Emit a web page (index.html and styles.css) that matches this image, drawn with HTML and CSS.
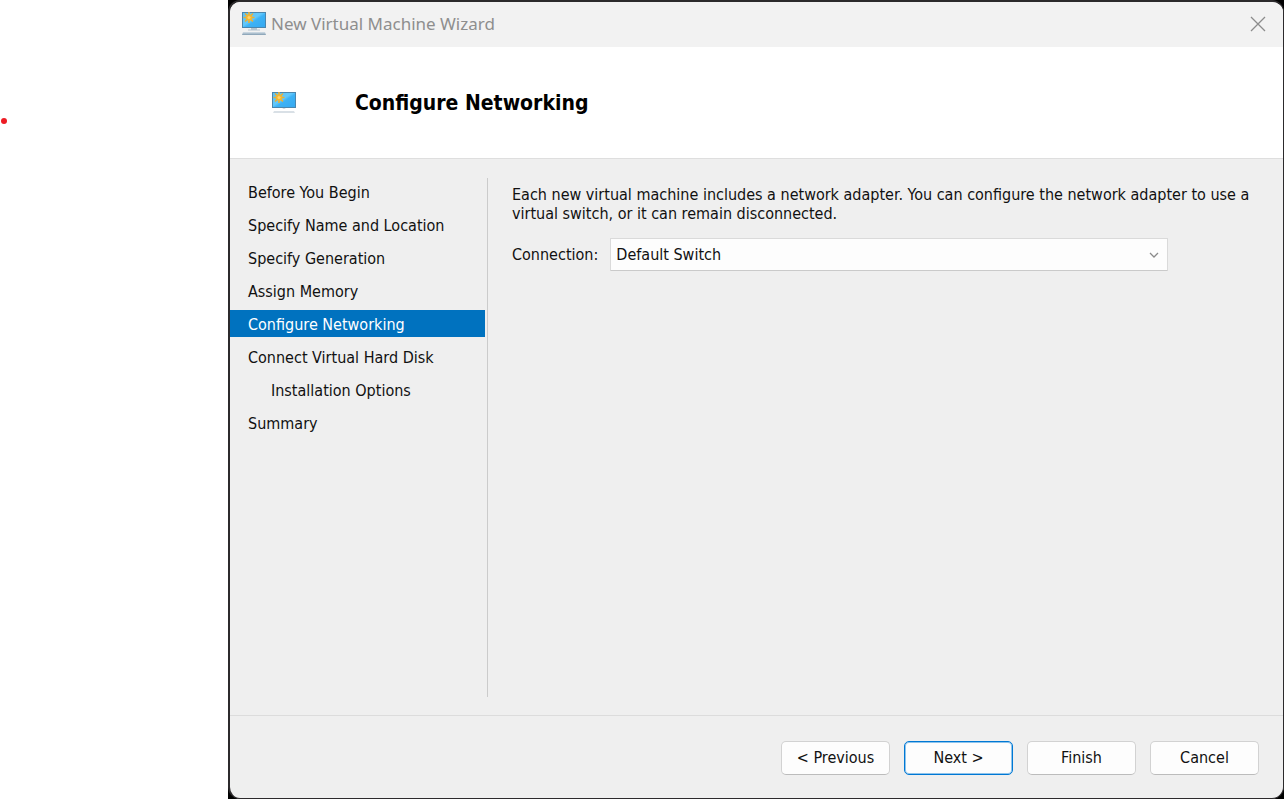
FILE: index.html
```html
<!DOCTYPE html>
<html lang="en">
<head>
<meta charset="utf-8">
<title>New Virtual Machine Wizard</title>
<link rel="stylesheet" href="styles.css">
</head>
<body>
<svg class="symbols" aria-hidden="true">
  <defs>
    <linearGradient id="screen" x1="0" y1="0" x2="1" y2="1">
      <stop offset="0" stop-color="#5cc3f5"/><stop offset=".45" stop-color="#62c8fb"/><stop offset=".55" stop-color="#3db2f5"/><stop offset="1" stop-color="#35a8f0"/>
    </linearGradient>
    <linearGradient id="base" x1="0" y1="0" x2="0" y2="1">
      <stop offset="0" stop-color="#d5e0e8"/><stop offset="1" stop-color="#829db2"/>
    </linearGradient>
    <symbol id="screen-sun" viewBox="0 0 24 16">
      <rect x=".5" y=".5" width="23" height="15" fill="url(#screen)" stroke="#4a86ae"/>
      <path d="M7 0v11M1.500 5.500h11M3 1.500l8 8M11 1.500l-8 8" fill="none" stroke="#e9ae35" stroke-width="1.600"/>
      <circle cx="7" cy="5.500" r="3.300" fill="#f2b632"/>
      <circle cx="7" cy="5.500" r="1.500" fill="#ffd36b"/>
    </symbol>
  </defs>
</svg>
<aside class="margin"><span class="dot"></span></aside>
<div class="frame">
<main class="window">
  <header class="titlebar">
    <svg class="app-icon" viewBox="0 0 24 23" aria-hidden="true">
      <use href="#screen-sun" width="24" height="16"/>
      <path d="M9 16h6v1.500h3v1H6v-1h3z" fill="#b3c4d0"/>
      <path d="M1 20h22l1 3H0z" fill="url(#base)"/>
    </svg>
    <span class="caption">New Virtual Machine Wizard</span>
    <button class="close" aria-label="Close"><svg viewBox="0 0 16 16" aria-hidden="true"><path d="M1 1l14 14M15 1L1 15" fill="none" stroke="#8c8c8c" stroke-width="1.300"/></svg></button>
  </header>
  <section class="banner">
    <svg class="page-icon" viewBox="0 0 24 21" aria-hidden="true">
      <use href="#screen-sun" width="24" height="16"/>
      <path d="M10 16h4l-2 1z" fill="#c3ced6"/>
      <path d="M2 19.500h20l1 1H1z" fill="#b4c2cd"/>
    </svg>
    <h1>Configure Networking</h1>
  </section>
  <div class="content">
    <nav class="steps" aria-label="Wizard steps">
      <a class="step" href="#">Before You Begin</a>
      <a class="step" href="#">Specify Name and Location</a>
      <a class="step" href="#">Specify Generation</a>
      <a class="step" href="#">Assign Memory</a>
      <a class="step current" href="#" aria-current="step">Configure Networking</a>
      <a class="step" href="#">Connect Virtual Hard Disk</a>
      <a class="step nested" href="#">Installation Options</a>
      <a class="step" href="#">Summary</a>
    </nav>
    <section class="panel">
      <p class="intro">Each new virtual machine includes a network adapter. You can configure the network adapter to use a virtual switch, or it can remain disconnected.</p>
      <div class="field">
        <label for="connection">Connection:</label>
        <div class="picker">
          <select id="connection"><option>Default Switch</option></select>
          <svg class="chevron" viewBox="0 0 10 6" aria-hidden="true"><path d="M1 1l4 4 4-4" fill="none" stroke="#8a8a8a" stroke-width="1.300"/></svg>
        </div>
      </div>
    </section>
  </div>
  <footer class="actions">
    <button class="btn">&lt; Previous</button>
    <button class="btn primary">Next &gt;</button>
    <button class="btn">Finish</button>
    <button class="btn">Cancel</button>
  </footer>
</main>
</div>
</body>
</html>
```
FILE: styles.css
```css
* { box-sizing: border-box; }
body {
  margin: 0;
  min-height: 100vh;
  display: flex;
  background: #fff;
  color: #111;
  font: 16px/20px "DejaVu Sans Condensed", "Noto Sans", sans-serif;
}
.symbols { position: absolute; width: 0; height: 0; }
.margin { width: 228px; flex: none; padding-top: 118px; }
.dot { display: block; width: 6px; height: 6px; margin-left: 1px; border-radius: 50%; background: #ed1c24; }
.frame { flex: 1; display: flex; background: #000; }
.window {
  flex: 1;
  display: flex;
  flex-direction: column;
  border: solid #2c2a2c;
  border-width: 2px 1px 1px 2px;
  border-radius: 12px;
  background: #efefef;
  overflow: hidden;
}
.titlebar { display: flex; align-items: center; height: 45px; padding: 0 17px 2px 12px; background: #f2f2f2; color: #8e8e8e; }
.app-icon { width: 24px; height: 23px; }
.caption { margin-left: 5px; font-family: "Noto Sans", sans-serif; font-size: 17px; }
.close { margin-left: auto; padding: 0; border: 0; background: none; }
.close svg { display: block; width: 16px; height: 16px; }
.banner { display: flex; align-items: center; gap: 59px; height: 112px; padding: 0 42px; background: #fff; border-bottom: 1px solid #dedede; }
.page-icon { width: 24px; height: 21px; }
h1 { margin: 0; font-size: 21px; line-height: 28px; font-weight: 700; color: #000; }
.content { flex: 1; display: flex; padding: 19px 0 18px; }
.steps { width: 258px; flex: none; display: flex; flex-direction: column; gap: 6px; padding: 0 2px 0 0; border-right: 1px solid #cbcbcb; }
.step { height: 27px; padding: 3px 18px 0; line-height: 24px; color: inherit; text-decoration: none; white-space: nowrap; }
.nested { padding-left: 41px; }
.current { background: #0072bf; color: #fff; }
.panel { flex: 1; padding: 7px 24px 0; }
.intro { margin: 0 0 15px; line-height: 19px; }
.field { display: flex; align-items: center; gap: 12px; }
.picker { position: relative; width: 558px; }
select {
  display: block;
  width: 100%;
  height: 33px;
  padding: 0 5px;
  border: 1px solid #dadada;
  border-bottom-color: #cacaca;
  border-radius: 1px;
  background: #fdfdfd;
  color: #111;
  font: inherit;
  appearance: none;
}
.chevron { position: absolute; right: 9px; top: 14px; width: 10px; height: 6px; pointer-events: none; }
.actions { display: flex; justify-content: flex-end; gap: 14px; height: 83px; padding: 25px 24px 0; border-top: 1px solid #dcdcdc; }
.btn { width: 109px; height: 34px; padding: 0; border: 1px solid #d2d2d2; border-bottom-color: #bcbcbc; border-radius: 5px; background: #fdfdfd; color: #111; font: inherit; }
.primary { border: 1px solid #0078d4; box-shadow: inset 0 0 0 1px #8fc4ec; }
```
